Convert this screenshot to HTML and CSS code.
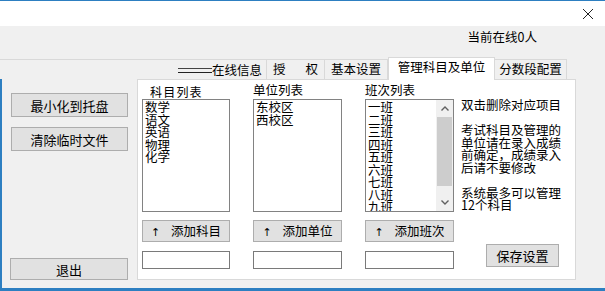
FILE: index.html
```html
<!DOCTYPE html>
<html lang="zh-CN">
<head>
    <meta charset="UTF-8">
    <title>管理科目及单位</title>
    <link rel="stylesheet" href="styles.css">
</head>
<body>
    <div class="window">
        <div class="titlebar">
            <svg class="close" width="12" height="12" viewBox="0 0 12 12">
                <path d="M1 1 L11 11 M11 1 L1 11" stroke="#222" stroke-width="1" fill="none"/>
            </svg>
        </div>
        <div class="status">当前在线0人</div>
        <div class="tabs">
            <div class="tab-fill"></div>
            <div class="tab tab-online"><span class="dash"></span>在线信息</div>
            <div class="tab tab-auth">授<span class="gap"></span>权</div>
            <div class="tab tab-basic">基本设置</div>
            <div class="tab tab-active">管理科目及单位</div>
            <div class="tab tab-score">分数段配置</div>
        </div>
        <div class="main">
            <div class="side">
                <button class="btn side-btn">最小化到托盘</button>
                <button class="btn side-btn">清除临时文件</button>
                <button class="btn exit-btn">退出</button>
            </div>
            <div class="page">
                <div class="col col-subject">
                    <div class="label label-subject">科目列表</div>
                    <div class="list">
                        <div class="items">
                            <div>数学</div>
                            <div>语文</div>
                            <div>英语</div>
                            <div>物理</div>
                            <div>化学</div>
                        </div>
                    </div>
                    <button class="btn add-btn"><span class="arrow">↑</span>添加科目</button>
                    <input class="field" type="text">
                </div>
                <div class="col">
                    <div class="label">单位列表</div>
                    <div class="list">
                        <div class="items">
                            <div>东校区</div>
                            <div>西校区</div>
                        </div>
                    </div>
                    <button class="btn add-btn"><span class="arrow">↑</span>添加单位</button>
                    <input class="field" type="text">
                </div>
                <div class="col">
                    <div class="label">班次列表</div>
                    <div class="list">
                        <div class="items">
                            <div>一班</div>
                            <div>二班</div>
                            <div>三班</div>
                            <div>四班</div>
                            <div>五班</div>
                            <div>六班</div>
                            <div>七班</div>
                            <div>八班</div>
                            <div>九班</div>
                        </div>
                        <div class="scrollbar">
                            <div class="sb-arrow">
                                <svg width="8" height="5" viewBox="0 0 8 5"><path d="M0.5 4.5 L4 1 L7.5 4.5" stroke="#606060" stroke-width="1.4" fill="none"/></svg>
                            </div>
                            <div class="sb-thumb"></div>
                            <div class="sb-track"></div>
                            <div class="sb-arrow">
                                <svg width="8" height="5" viewBox="0 0 8 5"><path d="M0.5 0.5 L4 4 L7.5 0.5" stroke="#606060" stroke-width="1.4" fill="none"/></svg>
                            </div>
                        </div>
                    </div>
                    <button class="btn add-btn"><span class="arrow">↑</span>添加班次</button>
                    <input class="field" type="text">
                </div>
                <div class="info">
                    <p>双击删除对应项目</p>
                    <p>考试科目及管理的<br>单位请在录入成绩<br>前确定，成绩录入<br>后请不要修改</p>
                    <p>系统最多可以管理<br>12个科目</p>
                    <button class="btn save-btn">保存设置</button>
                </div>
            </div>
        </div>
    </div>
</body>
</html>
```

FILE: styles.css
```css
* {
    margin: 0;
    padding: 0;
    box-sizing: border-box;
}

body {
    font-family: "Noto Sans CJK SC", "Liberation Sans", sans-serif;
    font-size: 12.5px;
    color: #000;
    background: #f0f0f0;
}

.window {
    width: 605px;
    height: 291px;
    display: flex;
    flex-direction: column;
    border-top: 1px solid #2d7fc1;
    border-bottom: 3px solid #2d7fc1;
    background: #f0f0f0;
    overflow: hidden;
}

.titlebar {
    height: 25px;
    flex: none;
    background: #fff;
    display: flex;
    justify-content: flex-end;
    align-items: center;
    padding-right: 11px;
}

.status {
    height: 31px;
    flex: none;
    text-align: right;
    padding-right: 68px;
    padding-top: 3px;
    line-height: 16px;
    font-size: 12.5px;
}

.tabs {
    height: 22px;
    flex: none;
    display: flex;
    align-items: flex-end;
    font-size: 12.5px;
}

.tab-fill {
    width: 174px;
    height: 20px;
    border-top: 1px solid #d9d9d9;
}

.tab {
    height: 20px;
    border: 1px solid #d9d9d9;
    border-bottom: none;
    border-left: none;
    line-height: 18px;
    text-align: center;
    white-space: nowrap;
}

.tab-online {
    width: 93px;
    text-align: left;
    padding-left: 4px;
    display: flex;
    align-items: center;
}

.dash {
    display: inline-block;
    width: 34px;
    height: 5px;
    border-top: 1px solid #444;
    border-bottom: 1px solid #222;
    margin-top: 1px;
}

.tab-auth {
    width: 58px;
}

.gap {
    display: inline-block;
    width: 20px;
}

.tab-basic {
    width: 63px;
}

.tab-active {
    width: 107px;
    height: 23px;
    background: #fff;
    border-left: 1px solid #d9d9d9;
    line-height: 17px;
    margin-bottom: -1px;
    position: relative;
    z-index: 1;
}

.tab-score {
    width: 72px;
}

.main {
    flex: 1;
    display: flex;
    align-items: flex-start;
}

.side {
    width: 137px;
    height: 209px;
    border-left: 2px solid #2d7fc1;
    display: flex;
    flex-direction: column;
    padding: 14px 0 8px 9px;
}

.btn {
    font-family: "Noto Sans CJK SC", "Liberation Sans", sans-serif;
    font-size: 13px;
    color: #000;
    background: #e1e1e1;
    border: 1px solid #adadad;
    line-height: 1;
}

.side-btn {
    width: 117px;
    height: 24px;
    margin-bottom: 10px;
}

.exit-btn {
    width: 118px;
    height: 22px;
    margin-top: auto;
    margin-left: -1px;
}

.page {
    width: 439px;
    height: 201px;
    background: #fff;
    border: 1px solid #d9d9d9;
    display: flex;
    padding-left: 4px;
    gap: 23px;
}

.col {
    width: 89px;
    display: flex;
    flex-direction: column;
}

.col-subject {
    width: 88px;
}

.label {
    height: 19px;
    padding-top: 1px;
    line-height: 17px;
    font-size: 12.5px;
}

.label-subject {
    padding-left: 8px;
    padding-top: 3px;
    font-size: 12px;
    letter-spacing: 1.2px;
}

.list {
    height: 113px;
    border: 1px solid #828282;
    display: flex;
    overflow: hidden;
}

.items {
    flex: 1;
    padding: 1px 0 0 2px;
    line-height: 12.5px;
    font-size: 12.5px;
}

.scrollbar {
    width: 17px;
    flex: none;
    background: #f0f0f0;
    display: flex;
    flex-direction: column;
}

.sb-arrow {
    height: 17px;
    display: flex;
    align-items: center;
    justify-content: center;
}

.sb-thumb {
    height: 69px;
    margin: 0 1px;
    background: #cdcdcd;
}

.sb-track {
    flex: 1;
}

.add-btn {
    height: 22px;
    margin-top: 8px;
    font-size: 12.5px;
}

.arrow {
    font-family: "DejaVu Sans", sans-serif;
    font-size: 11px;
    margin-right: 11px;
}

.field {
    height: 18px;
    margin-top: 9px;
    border: 1px solid #7a7a7a;
    background: #fff;
}

.info {
    flex: 1;
    margin-left: -16px;
    padding-top: 19px;
    line-height: 12.5px;
    font-size: 12.5px;
    display: flex;
    flex-direction: column;
}

.info p {
    margin-bottom: 12.5px;
}

.save-btn {
    width: 73px;
    height: 23px;
    margin-top: auto;
    margin-bottom: 12px;
    margin-left: 25px;
}
```
